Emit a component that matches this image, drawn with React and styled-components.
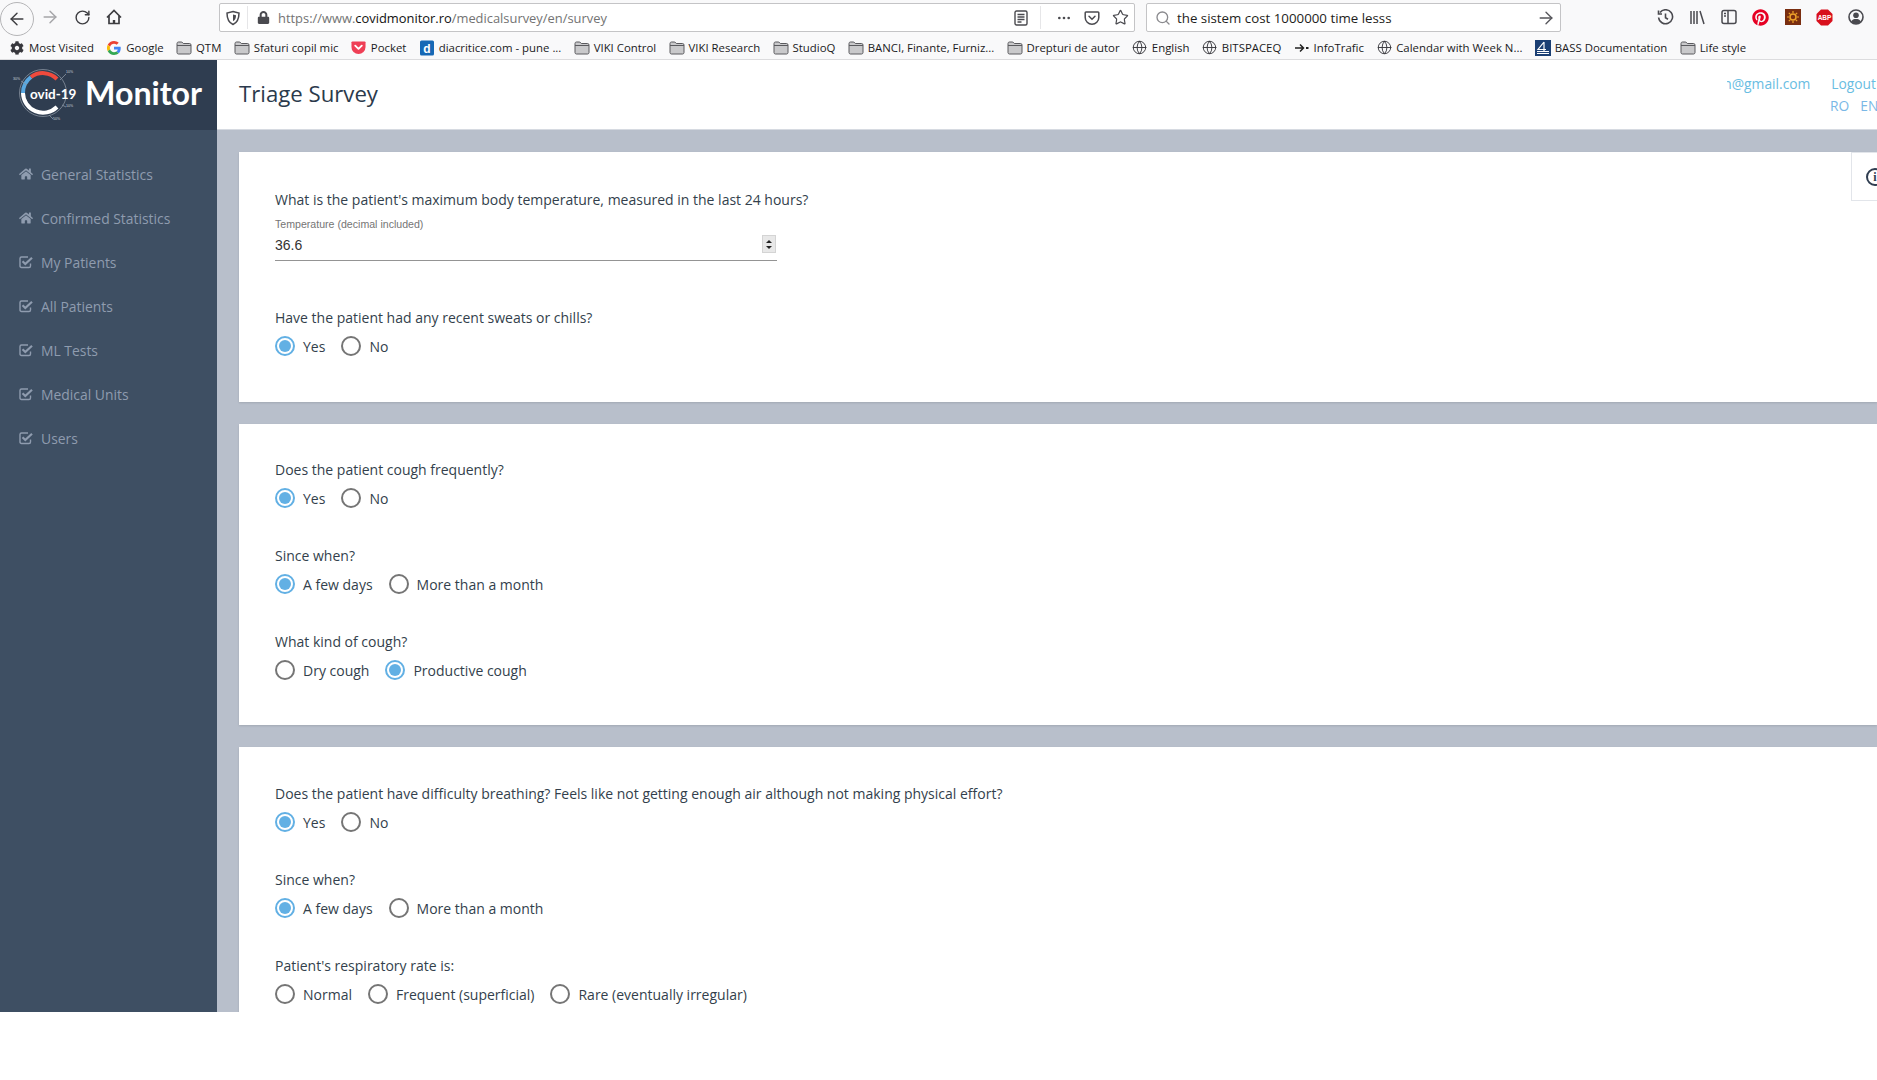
import React from 'react';
import styled, { createGlobalStyle } from 'styled-components';
import { ArrowLeft, ArrowRight, RotateCw, Search, Globe, MoreHorizontal, Star } from 'lucide-react';
import { FaHome, FaPinterest, FaLock, FaCog } from 'react-icons/fa';

const Global = createGlobalStyle`
  html, body { margin: 0; padding: 0; background: #fff; overflow: hidden; height: 1080px; }
  * { box-sizing: border-box; }
  body { font-family: "Open Sans", "Noto Sans", sans-serif; }
`;
const Root = styled.div`width: 1877px; height: 1080px; overflow: hidden; display: flex; flex-direction: column; background: #fff;`;

/* browser chrome */
const Chrome = styled.div`height: 60px; background: #f9f9fa; border-bottom: 1px solid #dcdcde; display: flex; flex-direction: column;`;
const NavRow = styled.div`height: 36px; display: flex; align-items: flex-start; padding-top: 3px;`;
const BackCircle = styled.div`
  width: 34px; height: 34px; margin-top: -1px; border: 1px solid #b5b5b7; border-radius: 50%; background: #f9f9fa;
  display: flex; align-items: center; justify-content: center; color: #3d3d40; flex-shrink: 0;
`;
const NavBtn = styled.div`
  width: 32px; height: 28px; display: flex; align-items: center; justify-content: center; flex-shrink: 0;
  color: ${p => (p.$dim ? '#a5a5a8' : '#3d3d40')};
`;
const NavBtns = styled.div`display: flex; width: 96px; flex-shrink: 0;`;
const UrlBar = styled.div`
  width: 916px; height: 29px; margin-left: 89px; background: #fff; border: 1px solid #c4c4c6; border-radius: 2px;
  display: flex; align-items: center; flex-shrink: 0; padding-left: 5px; color: #4a4a4f;
`;
const Divider = styled.div`width: 1px; height: 23px; background: #e6e6e8; margin: ${p => p.$m};`;
const LockMark = styled.span`display: flex; margin-left: 9px;`;
const UrlText = styled.div`font-size: 12.9px; color: #737373; margin-left: 8px; white-space: nowrap; flex: 1; b { font-weight: 400; color: #111; }`;
const UrlTools = styled.div`display: flex; align-items: center; color: #4a4a4f; gap: 12px; padding-right: 5px;`;
const ReaderSlot = styled.span`display: flex;`;
const SearchBar = styled.div`
  width: 415px; height: 29px; margin-left: 11px; background: #fff; border: 1px solid #c4c4c6; border-radius: 2px;
  display: flex; align-items: center; flex-shrink: 0; padding: 0 4px 0 8px;
`;
const SearchText = styled.div`font-size: 13.3px; color: #1d1d20; margin-left: 6px; flex: 1; white-space: nowrap;`;
const RightTools = styled.div`display: flex; align-items: center; margin-left: 93px; gap: 8.8px; height: 28px; color: #4a4a4f;`;
const ToolIcon = styled.div`width: 23px; height: 23px; display: flex; align-items: center; justify-content: center; flex-shrink: 0;`;

const BookRow = styled.div`height: 23px; display: flex; align-items: center; padding-left: 9px; gap: 12.3px; overflow: hidden;`;
const Book = styled.div`display: flex; align-items: center; gap: 4px; font-size: 11.4px; color: #1b1b1d; white-space: nowrap;`;
const BookIcon = styled.div`width: 16px; height: 16px; display: flex; align-items: center; justify-content: center; flex-shrink: 0; color: #38383d;`;

/* page */
const Page = styled.div`height: 952px; display: flex; overflow: hidden;`;
const Side = styled.aside`width: 217px; flex-shrink: 0; background: #3e4f63; display: flex; flex-direction: column;`;
const LogoBar = styled.div`height: 70px; background: #2f3d50; display: flex; align-items: center;`;
const LogoWord = styled.div`font-family: "Lato", sans-serif; font-weight: 700; font-size: 32.2px; color: #fff; line-height: 1; margin: -4px 0 0 -2px;`;
const Menu = styled.nav`padding-top: 22px; display: flex; flex-direction: column;`;
const MenuItem = styled.div`
  height: 44px; display: flex; align-items: center; padding-left: 19px; gap: 8px; color: #8f9caf; font-size: 13.9px;
  svg { width: 14px; height: 14px; flex-shrink: 0; }
`;
const Main = styled.main`flex: 1; min-width: 0; background: #b8bfcb; display: flex; flex-direction: column; position: relative; overflow: hidden;`;
const TopBar = styled.header`
  height: 70px; flex-shrink: 0; background: #fff; border-bottom: 1px solid #d6dae1; display: flex; align-items: flex-start;
  justify-content: space-between; padding-left: 22px; overflow: hidden;
`;
const Title = styled.h1`margin: 19px 0 0; font-size: 22.2px; font-weight: 400; color: #2b3a4c; line-height: 30px;`;
const UserBox = styled.div`margin-top: 13px; flex-shrink: 0; width: 150px; font-size: 13.8px; color: #69bde2;`;
const UserLine = styled.div`display: flex; height: 21px; align-items: center; justify-content: flex-end; gap: 21px; white-space: nowrap; padding-right: 1px;`;
const Email = styled.div`width: 83px; overflow: hidden; display: flex; justify-content: flex-end;`;
const LangLine = styled.div`display: flex; height: 23px; align-items: center; padding-left: 103px; gap: 11px; color: #7ab8e6; white-space: nowrap;`;
const Cards = styled.div`padding: 22px 0 0 22px; display: flex; flex-direction: column; gap: 22px;`;
const Card = styled.section`background: #fff; padding: ${p => p.$pt}px 0 ${p => p.$pb}px 36px; box-shadow: 0 1px 2px rgba(0,0,0,.12); flex-shrink: 0;`;
const Group = styled.div`margin-bottom: 38px; &:last-child { margin-bottom: 0; }`;
const Question = styled.div`font-size: 14px; line-height: 20px; color: #333f4c; margin-bottom: 8px; white-space: nowrap;`;
const Field = styled.div`width: 502px; margin: -5px 0 47px; border-bottom: 1px solid #949494; height: 48px; position: relative; font-family: "Liberation Sans", sans-serif;`;
const FieldLabel = styled.div`font-size: 10.6px; line-height: 12px; color: #757575; padding-top: 5px; height: 17px;`;
const FieldValue = styled.div`font-size: 14px; line-height: 16px; color: #333; margin-top: 7px;`;
const Spinner = styled.div`
  position: absolute; right: 1px; top: 22px; width: 14px; height: 18px; background: #e8e8e8; border: 1px solid #d4d4d4;
  display: flex; flex-direction: column; align-items: center; justify-content: space-around; padding: 2px 0;
  i { width: 0; height: 0; border-left: 3px solid transparent; border-right: 3px solid transparent; }
  i:first-child { border-bottom: 3.5px solid #222; }
  i:last-child { border-top: 3.5px solid #222; }
`;
const Options = styled.div`display: flex; height: 20px; align-items: center; gap: 16px;`;
const Option = styled.label`display: flex; align-items: center; gap: 8px; font-size: 14px; color: #333f4c; white-space: nowrap;`;
const Radio = styled.span`
  width: 20px; height: 20px; border-radius: 50%; border: 2px solid ${p => (p.$on ? '#62b0e4' : '#757575')};
  display: flex; align-items: center; justify-content: center; flex-shrink: 0;
  &::after { content: ''; width: 12px; height: 12px; border-radius: 50%; background: ${p => (p.$on ? '#62b0e4' : 'transparent')}; }
`;
const InfoTab = styled.div`
  position: absolute; right: 0; top: 92px; width: 26px; height: 49px; background: #fff; border: 1px solid #e2e5ea; border-right: 0;
  display: flex; align-items: center; padding-left: 14px; overflow: hidden;
`;
const InfoCircle = styled.div`
  width: 18px; height: 18px; flex-shrink: 0; border: 2px solid #2f3d50; border-radius: 50%; color: #2f3d50; font: 700 12px/14px "Liberation Serif", serif; text-align: center;
`;

const Folder = () => (
  <svg width="16" height="16" viewBox="0 0 16 16"><path d="M1 3.500C1 2.700 1.600 2 2.400 2h3.400l1.500 1.500h6.300c.8 0 1.400.6 1.400 1.400v7.700c0 .8-.6 1.400-1.400 1.400H2.400C1.600 14 1 13.400 1 12.600z" fill="#c9c9cb" stroke="#5a5a5e" strokeWidth="1"/><path d="M1 5.500h14" stroke="#5a5a5e" strokeWidth="1"/></svg>
);
const GoogleG = () => (
  <svg width="14" height="14" viewBox="0 0 48 48"><path fill="#EA4335" d="M24 9.500c3.500 0 6.700 1.200 9.200 3.600l6.900-6.900C35.900 2.400 30.500 0 24 0 14.600 0 6.500 5.400 2.600 13.200l8 6.200C12.500 13.700 17.800 9.500 24 9.500z"/><path fill="#4285F4" d="M47 24.500c0-1.600-.2-3.100-.4-4.500H24v9h13c-.6 3-2.200 5.500-4.800 7.200l7.700 6C44.400 38 47 31.800 47 24.500z"/><path fill="#FBBC05" d="M10.600 28.600A14.500 14.500 0 0 1 10.600 19.400l-8-6.200a24 24 0 0 0 0 21.600z"/><path fill="#34A853" d="M24 48c6.500 0 11.900-2.100 15.900-5.800l-7.700-6c-2.200 1.400-4.900 2.300-8.200 2.300-6.200 0-11.500-4.200-13.400-9.900l-8 6.200C6.500 42.600 14.600 48 24 48z"/></svg>
);
const PocketIcon = () => (
  <svg width="15" height="15" viewBox="0 0 16 16"><path d="M1.500 1.500h13c.6 0 1 .4 1 1v5a7.500 7.500 0 0 1-15 0v-5c0-.6.400-1 1-1z" fill="#ef3f56"/><path d="M4.500 6 8 9.400 11.500 6" fill="none" stroke="#fff" strokeWidth="2" strokeLinecap="round" strokeLinejoin="round"/></svg>
);
const Diacritice = () => (
  <svg width="16" height="16" viewBox="0 0 16 16"><rect x="1" y="0.500" width="14" height="15" rx="1.500" fill="#1668b5"/><text x="8" y="12.500" textAnchor="middle" fontFamily="Liberation Sans" fontWeight="700" fontSize="12" fill="#fff">d</text></svg>
);
const Bass = () => (
  <svg width="16" height="16" viewBox="0 0 16 16"><rect width="16" height="16" fill="#1b3f73"/><path d="M9 2 3 9.500h8M9 2v9M2 11.500h12M2 13.500h12" fill="none" stroke="#fff" strokeWidth="1.200"/></svg>
);
const InfoTraficIcon = () => (
  <svg width="16" height="16" viewBox="0 0 16 16"><path d="M1 8h8M6 4.500 9.500 8 6 11.500" fill="none" stroke="#222" strokeWidth="1.500"/><rect x="12" y="7" width="2.500" height="2" fill="#222"/></svg>
);
const CheckSquare = () => (
  <svg viewBox="0 0 14 14" fill="none"><path d="M11.500 8.500v2.500c0 .9-.6 1.500-1.500 1.500H2.500C1.600 12.500 1 11.900 1 11V3.500C1 2.600 1.600 2 2.500 2H9" stroke="#8f9caf" strokeWidth="1.400"/><path d="M3.500 6.300 6.300 9 13 2.800" stroke="#8f9caf" strokeWidth="2.200"/></svg>
);

const HomeIcon = () => (
  <svg width="18" height="18" viewBox="0 0 18 18" fill="none" stroke="#3d3d40" strokeWidth="1.700"><path d="M2 9.500 9 2.500l7 7M4 8v7.500h10V8"/><path d="M7.800 15.500v-3.500h2.400v3.500" fill="#3d3d40" stroke="none"/></svg>
);
const ShieldIcon = () => (
  <svg width="16" height="16" viewBox="0 0 16 16" fill="none" stroke="#4a4a4f" strokeWidth="1.500"><path d="M8 1.500 14 3c0 6-1.500 9.500-6 11.500C3.500 12.500 2 9 2 3z"/><path d="M8 4.500 11 5.300c0 3-.8 4.700-3 5.900z" fill="#4a4a4f" stroke="none"/></svg>
);
const ReaderIcon = () => (
  <svg width="14" height="16" viewBox="0 0 14 16" fill="none" stroke="#4a4a4f" strokeWidth="1.400"><rect x="1" y="1" width="12" height="14" rx="1.500"/><path d="M3.500 4.500h7M3.500 7h7M3.500 9.500h7M3.500 12h4"/></svg>
);
const PocketOutline = () => (
  <svg width="16" height="16" viewBox="0 0 16 16" fill="none" stroke="#4a4a4f" strokeWidth="1.500"><path d="M2 2h12c.500 0 .8.300.8.800v4.700a6.800 6.800 0 0 1-13.600 0V2.800C1.200 2.300 1.500 2 2 2z"/><path d="M5 6.300 8 9.300l3-3" strokeLinecap="round"/></svg>
);
const HistoryIcon = () => (
  <svg width="17" height="17" viewBox="0 0 17 17" fill="none" stroke="#4a4a4f" strokeWidth="1.600"><path d="M3 3.500A7 7 0 1 1 1.600 8.500"/><path d="M1.500 1.500v3.500h3.500" /><path d="M8.500 4.500v4.200l2.500 1.500"/></svg>
);
const LibraryIcon = () => (
  <svg width="17" height="17" viewBox="0 0 17 17" fill="none" stroke="#4a4a4f" strokeWidth="1.500"><path d="M2 2v13M5 2v13M8 2v13M11 2l4 13"/></svg>
);
const SidebarIcon = () => (
  <svg width="16" height="16" viewBox="0 0 16 16" fill="none" stroke="#4a4a4f" strokeWidth="1.500"><rect x="1" y="1.500" width="14" height="13" rx="2"/><path d="M7 1.500v13M3 4.500h2M3 7h2"/></svg>
);
const SunTile = () => (
  <svg width="16" height="16" viewBox="0 0 16 16"><rect width="16" height="16" fill="#7a2e10"/><circle cx="8" cy="8" r="3" fill="none" stroke="#f0a52a" strokeWidth="1.500"/><path d="M8 2v2M8 12v2M2 8h2M12 8h2M3.800 3.800l1.400 1.400M10.800 10.800l1.400 1.400M3.800 12.200l1.400-1.400M10.800 5.200l1.400-1.400" stroke="#f0a52a" strokeWidth="1.200"/></svg>
);
const AbpIcon = () => (
  <svg width="17" height="17" viewBox="0 0 17 17"><path d="M5 0.500h7L16.500 5v7L12 16.500H5L.5 12V5z" fill="#d8101c"/><text x="8.500" y="11" textAnchor="middle" fontFamily="Liberation Sans" fontWeight="700" fontSize="6.500" fill="#fff">ABP</text></svg>
);
const UserIcon = () => (
  <svg width="16" height="16" viewBox="0 0 16 16"><circle cx="8" cy="8" r="7" fill="none" stroke="#4a4a4f" strokeWidth="1.600"/><circle cx="8" cy="6.300" r="2.800" fill="#4a4a4f"/><path d="M3 12.800C4 10.500 6 10 8 10s4 .5 5 2.800A7 7 0 0 1 3 12.800z" fill="#4a4a4f"/></svg>
);

const Logo = () => (
  <svg width="87" height="70" viewBox="0 0 87 70" style={{ flexShrink: 0 }}>
    <circle cx="43" cy="33" r="23.500" fill="none" stroke="#76818f" strokeWidth="1"/>
    <path d="M23 33A20 20 0 0 1 31 17" fill="none" stroke="#5aa9e2" strokeWidth="4"/>
    <path d="M31 17A20 20 0 0 1 57 19" fill="none" stroke="#ef4a3d" strokeWidth="4"/>
    <path d="M23 33A20 20 0 0 0 57 47" fill="none" stroke="#fff" strokeWidth="4"/>
    <path d="M21 21 27 25M66 14 60 20M62 45 66 47M49 55 53 59" stroke="#8a95a3" strokeWidth=".8"/>
    <rect x="27" y="27" width="8" height="14" fill="#2f3d50"/>
    <text x="30" y="38.500" fontFamily="Lato, sans-serif" fontWeight="700" fontSize="13.500" fill="#fff">ovid-19</text>
    <text x="13" y="20" fontFamily="Liberation Sans" fontSize="3.500" fill="#ccd3dc">30%</text>
    <text x="66" y="13" fontFamily="Liberation Sans" fontSize="3.500" fill="#ccd3dc">10%</text>
    <text x="66" y="47" fontFamily="Liberation Sans" fontSize="3.500" fill="#ccd3dc">10%</text>
    <text x="53" y="60" fontFamily="Liberation Sans" fontSize="3.500" fill="#ccd3dc">50%</text>
  </svg>
);

const bookmarks = [
  ['cog', 'Most Visited'], ['g', 'Google'], ['f', 'QTM'], ['f', 'Sfaturi copil mic'], ['p', 'Pocket'],
  ['d', 'diacritice.com - pune ...'], ['f', 'VIKI Control'], ['f', 'VIKI Research'], ['f', 'StudioQ'],
  ['f', 'BANCI, Finante, Furniz...'], ['f', 'Drepturi de autor'], ['w', 'English'], ['w', 'BITSPACEQ'],
  ['i', 'InfoTrafic'], ['w', 'Calendar with Week N...'], ['b', 'BASS Documentation'], ['f', 'Life style'],
];
const bookIcon = k => ({
  cog: <FaCog size={14} />, g: <GoogleG />, f: <Folder />, p: <PocketIcon />, d: <Diacritice />,
  w: <Globe size={15} strokeWidth={1.5} />, i: <InfoTraficIcon />, b: <Bass />,
}[k]);

const menu = [
  ['h', 'General Statistics'], ['h', 'Confirmed Statistics'], ['c', 'My Patients'], ['c', 'All Patients'],
  ['c', 'ML Tests'], ['c', 'Medical Units'], ['c', 'Users'],
];

const RadioGroup = ({ q, opts, sel }) => (
  <Group>
    <Question>{q}</Question>
    <Options>
      {opts.map((o, i) => (
        <Option key={o}><Radio $on={i === sel} />{o}</Option>
      ))}
    </Options>
  </Group>
);

export default function App() {
  return (
    <Root>
      <Global />
      <Chrome>
        <NavRow>
          <BackCircle><ArrowLeft size={20} strokeWidth={1.7} /></BackCircle>
          <NavBtns>
            <NavBtn $dim><ArrowRight size={20} strokeWidth={1.7} /></NavBtn>
            <NavBtn><RotateCw size={17} strokeWidth={2} /></NavBtn>
            <NavBtn><HomeIcon /></NavBtn>
          </NavBtns>
          <UrlBar>
            <ShieldIcon />
            <Divider $m="0 0 0 6px" />
            <LockMark><FaLock size={13} /></LockMark>
            <UrlText>https://www.<b>covidmonitor.ro</b>/medicalsurvey/en/survey</UrlText>
            <UrlTools>
              <ReaderSlot><ReaderIcon /></ReaderSlot>
              <Divider $m="0 3px 0 0" />
              <MoreHorizontal size={16} />
              <PocketOutline />
              <Star size={17} strokeWidth={1.7} />
            </UrlTools>
          </UrlBar>
          <SearchBar>
            <Search size={16} color="#8a8a8e" />
            <SearchText>the sistem cost 1000000 time lesss</SearchText>
            <ArrowRight size={20} strokeWidth={1.6} color="#55555a" />
          </SearchBar>
          <RightTools>
            <ToolIcon><HistoryIcon /></ToolIcon>
            <ToolIcon><LibraryIcon /></ToolIcon>
            <ToolIcon><SidebarIcon /></ToolIcon>
            <ToolIcon><FaPinterest size={17} color="#e60023" /></ToolIcon>
            <ToolIcon><SunTile /></ToolIcon>
            <ToolIcon><AbpIcon /></ToolIcon>
            <ToolIcon><UserIcon /></ToolIcon>
          </RightTools>
        </NavRow>
        <BookRow>
          {bookmarks.map(([k, t]) => (
            <Book key={t}><BookIcon>{bookIcon(k)}</BookIcon>{t}</Book>
          ))}
        </BookRow>
      </Chrome>
      <Page>
        <Side>
          <LogoBar>
            <Logo />
            <LogoWord>Monitor</LogoWord>
          </LogoBar>
          <Menu>
            {menu.map(([k, t]) => (
              <MenuItem key={t}>{k === 'h' ? <FaHome /> : <CheckSquare />}{t}</MenuItem>
            ))}
          </Menu>
        </Side>
        <Main>
          <TopBar>
            <Title>Triage Survey</Title>
            <UserBox>
              <UserLine><Email>admin@gmail.com</Email><span>Logout</span></UserLine>
              <LangLine><span>RO</span><span>EN</span></LangLine>
            </UserBox>
          </TopBar>
          <InfoTab><InfoCircle>i</InfoCircle></InfoTab>
          <Cards>
            <Card $pt={38} $pb={46}>
              <Question>What is the patient's maximum body temperature, measured in the last 24 hours?</Question>
              <Field>
                <FieldLabel>Temperature (decimal included)</FieldLabel>
                <FieldValue>36.6</FieldValue>
                <Spinner><i /><i /></Spinner>
              </Field>
              <RadioGroup q="Have the patient had any recent sweats or chills?" opts={['Yes', 'No']} sel={0} />
            </Card>
            <Card $pt={36} $pb={45}>
              <RadioGroup q="Does the patient cough frequently?" opts={['Yes', 'No']} sel={0} />
              <RadioGroup q="Since when?" opts={['A few days', 'More than a month']} sel={0} />
              <RadioGroup q="What kind of cough?" opts={['Dry cough', 'Productive cough']} sel={1} />
            </Card>
            <Card $pt={37} $pb={44}>
              <RadioGroup q="Does the patient have difficulty breathing? Feels like not getting enough air although not making physical effort?" opts={['Yes', 'No']} sel={0} />
              <RadioGroup q="Since when?" opts={['A few days', 'More than a month']} sel={0} />
              <RadioGroup q="Patient's respiratory rate is:" opts={['Normal', 'Frequent (superficial)', 'Rare (eventually irregular)']} sel={-1} />
            </Card>
          </Cards>
        </Main>
      </Page>
    </Root>
  );
}
